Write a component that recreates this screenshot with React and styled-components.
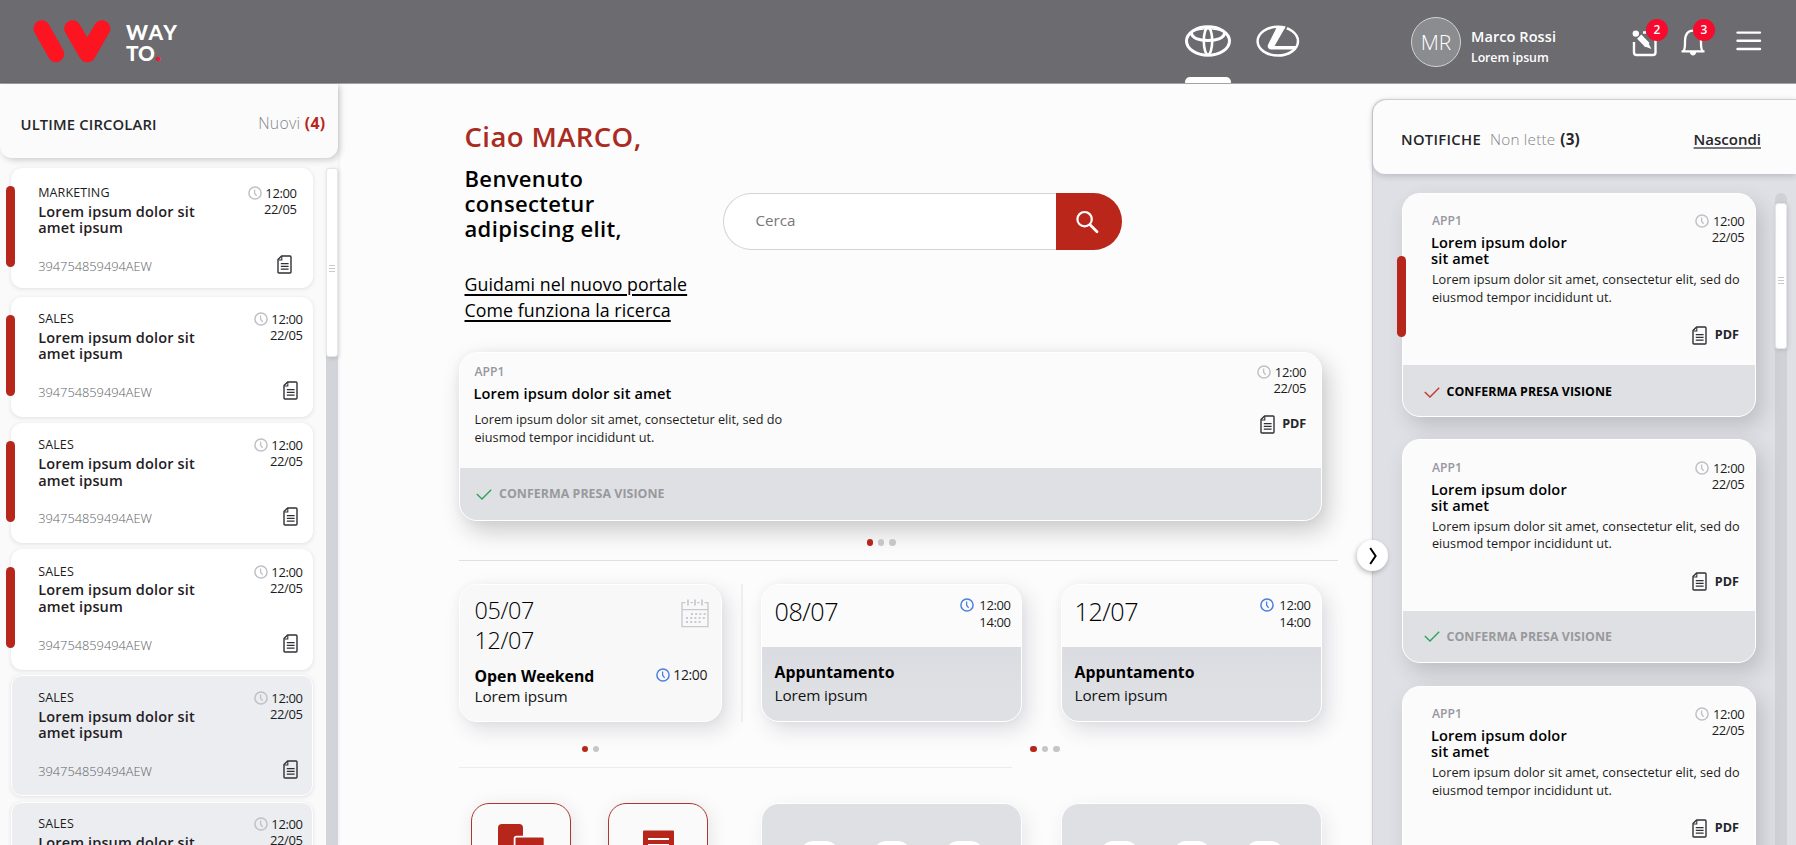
import React from "react";
import styled, { createGlobalStyle, css } from "styled-components";

const GlobalStyle = createGlobalStyle`
  * { box-sizing: border-box; }
  body {
    margin: 0;
    background: #fcfcfc;
    font-family: "Open Sans", "Noto Sans", sans-serif;
    color: #000;
    overflow: hidden;
  }
`;

const red = "#b6261b";

const type = (size, line, weight = 400, spacing = 0) => css`
  font-size: ${size}px;
  line-height: ${line}px;
  font-weight: ${weight};
  letter-spacing: ${spacing}px;
  white-space: nowrap;
`;

const Page = styled.div`
  width: 1796px;
  height: 845px;
  display: flex;
  flex-direction: column;
  overflow: hidden;
`;

/* ---------- Top bar ---------- */
const TopBar = styled.header`
  flex: none;
  height: 84px;
  display: flex;
  align-items: flex-start;
  background: #6b6b70;
  border-bottom: 1px solid #a3a3a7;
  color: #fff;
`;
const Logo = styled.div`
  display: flex;
  gap: 15px;
  padding: 20px 0 0 33px;
  width: 1185px;
`;
const LogoName = styled.div`
  font-family: Lato, "Open Sans", sans-serif;
  ${type(20.8, 21, 900, 1.5)}
  margin-top: 1px;
`;
const LogoLine = styled.div`
  height: 21px;
  letter-spacing: ${(p) => p.$spacing}px;
  span { color: #fc1230; font-size: 27px; line-height: 10px; }
`;
const BrandTab = styled.div`
  width: ${(p) => p.$width}px;
  height: 83px;
  padding-top: 25px;
  margin-right: ${(p) => p.$gap}px;
  display: flex;
  flex-direction: column;
  justify-content: space-between;
`;
const ActiveMark = styled.div`
  height: 6px;
  border-radius: 5px 5px 0 0;
  background: #fff;
`;
const Avatar = styled.div`
  width: 50px;
  height: 50px;
  margin-top: 17px;
  border: 1px solid #d3d3d5;
  border-radius: 50%;
  background: #8b8c90;
  text-align: center;
  ${type(21, 48, 300, 0)}
`;
const UserInfo = styled.div`
  width: 160px;
  padding: 25.5px 0 0 10px;
`;
const UserName = styled.div`${type(14.5, 21, 600, 0.08)}`;
const UserRole = styled.div`${type(12.4, 21, 600, -0.1)}`;
const Action = styled.div`
  position: relative;
  width: ${(p) => p.$width}px;
  margin: ${(p) => p.$top}px ${(p) => p.$gap}px 0 ${(p) => p.$left || 0}px;
  height: 30px;
`;
const Badge = styled.div`
  position: absolute;
  left: ${(p) => p.$left}px;
  top: ${(p) => p.$top}px;
  width: 22px;
  height: 22px;
  border-radius: 50%;
  background: #f70a2d;
  text-align: center;
  ${type(12, 22, 600)}
`;

/* ---------- Shared pieces ---------- */
const Body = styled.div`
  flex: 1;
  min-height: 0;
  display: flex;
`;
const When = styled.div`
  text-align: right;
  color: #1b1c20;
  ${(p) => type(p.$size || 13, p.$line || 16, 400, -0.4)}
`;
const ClockRow = styled.div`
  display: flex;
  justify-content: flex-end;
  align-items: center;
  gap: ${(p) => p.$gap || 3.6}px;
`;
const Dots = styled.div`
  display: flex;
  gap: 4.4px;
  height: 7px;
  margin-left: ${(p) => p.$left || 0}px;
`;
const Dot = styled.i`
  width: 6.8px;
  height: 6.8px;
  border-radius: 50%;
  background: ${(p) => (p.$on ? red : "#c6c6c8")};
`;
const Marker = styled.div`
  position: absolute;
  left: -6px;
  top: ${(p) => p.$top}px;
  width: 9px;
  height: 81px;
  border-radius: 4.5px;
  background: ${red};
`;
const Track = styled.div`
  flex: none;
  width: 12px;
  border-radius: 6px 6px 0 0;
  background: ${(p) => p.$color};
  padding-top: ${(p) => p.$offset || 0}px;
`;
const Thumb = styled.div`
  height: ${(p) => p.$height}px;
  border: 1px solid #e6e6e9;
  border-radius: 3px;
  background: #fff;
  box-shadow: 1px 1px 4px rgba(40, 40, 60, 0.15);
  padding-top: ${(p) => p.$grip}px;
  display: flex;
  flex-direction: column;
  align-items: center;
  gap: 2px;
  i { width: 6px; height: 1px; background: #c9cacd; }
`;

/* ---------- Left panel ---------- */
const Circulars = styled.aside`
  flex: none;
  width: 338px;
  display: flex;
  flex-direction: column;
  background: #fafafa;
  box-shadow: 1px 0 3px rgba(0, 0, 0, 0.06);
`;
const CircularsHead = styled.div`
  position: relative;
  flex: none;
  height: 73.5px;
  padding: 29px 12.5px 0 20.5px;
  display: flex;
  justify-content: space-between;
  align-items: flex-start;
  background: #fbfbfb;
  border-radius: 0 0 12px 12px;
  box-shadow: 2px 2px 6px rgba(40, 40, 60, 0.22);
`;
const PanelTitle = styled.div`
  ${(p) => type(14.8, 20, 600, p.$spacing)}
  color: #25262a;
`;
const CircularsTitle = styled(PanelTitle)`
  margin-top: 1px;
`;
const NewCount = styled.div`
  ${type(15.8, 20, 300, 0.3)}
  color: #85868a;
  b { color: ${red}; font-weight: 700; }
`;
const CircularsBody = styled.div`
  flex: 1;
  min-height: 0;
  display: flex;
  justify-content: space-between;
  padding: 10.5px 0 0 11px;
`;
const CircularList = styled.div`
  width: 302px;
`;
const CircularCard = styled.article`
  position: relative;
  height: 120.3px;
  margin-bottom: ${(p) => (p.$first ? 8.6 : 5.9)}px;
  padding: ${(p) => (p.$first ? 16 : 13.4)}px ${(p) => (p.$first ? 15.5 : 9.5)}px 0 26.2px;
  border: 1px solid #fff;
  border-radius: 11px;
  background: ${(p) => (p.$read ? "#ecedf1" : "#fff")};
  box-shadow: 0 1px 4px rgba(40, 40, 60, 0.12);
`;
const CardRow = styled.div`
  display: flex;
  justify-content: space-between;
  align-items: ${(p) => p.$align || "flex-start"};
`;
const Category = styled.div`
  ${type(12.5, 16, 400, 0.12)}
  color: #1b1c20;
`;
const CircularTitle = styled.h3`
  margin: 2.7px 0 0;
  ${type(14.5, 16.5, 600, 0.15)}
  color: #1f2024;
`;
const CircularCode = styled.div`
  ${type(12.8, 16, 300, 0)}
  color: #606166;
`;
const CodeRow = styled(CardRow)`
  margin-top: 18.2px;
  padding-right: 5px;
`;

/* ---------- Main ---------- */
const Main = styled.main`
  flex: 1;
  min-width: 0;
  padding-left: 121px;
`;
const Hero = styled.section`
  height: 268px;
  display: flex;
`;
const Greeting = styled.div`
  width: 264px;
  padding: 37px 0 0 5.5px;
`;
const Hello = styled.h1`
  margin: 0;
  ${type(27.5, 32, 600, 0.4)}
  color: #a92b22;
`;
const Welcome = styled.h2`
  margin: 13px 0 29.6px;
  ${type(22, 25, 600, 0.35)}
`;
const GuideLink = styled.a`
  display: block;
  ${type(17.8, 26.5, 400, 0.07)}
  text-decoration: underline;
  text-decoration-thickness: 1.5px;
  text-underline-offset: 3px;
`;
const Search = styled.div`
  width: 399px;
  height: 57px;
  margin-top: 109px;
  display: flex;
  border: 1px solid #d3d4d6;
  border-right: 0;
  border-radius: 28.5px;
  background: #fff;
`;
const SearchText = styled.div`
  flex: 1;
  padding-left: 31.5px;
  ${type(15.2, 53, 400, 0)}
  color: #77787b;
`;
const SearchButton = styled.div`
  width: 66px;
  margin: -1px 0;
  border-radius: 0 28.5px 28.5px 0;
  background: #bb261a;
  display: flex;
  align-items: center;
  padding-left: 19px;
`;
const Featured = styled.article`
  width: 862.5px;
  height: 169px;
  border: 1px solid #fff;
  border-radius: 18px;
  background: #fbfbfb;
  box-shadow: 6px 10px 24px rgba(0, 0, 0, 0.2), 0 0 10px rgba(0, 0, 0, 0.04);
  overflow: hidden;
`;
const FeaturedBody = styled(CardRow)`
  height: 115px;
  padding: 11.2px 14.5px 0 14.5px;
`;
const AppName = styled.div`
  ${type(12.2, 16, 600, 0)}
  color: #96979f;
`;
const FeaturedTitle = styled.h3`
  margin: 4.2px 0 9px -1px;
  ${type(14.6, 18, 600, 0.12)}
`;
const Copy = styled.p`
  margin: 0;
  ${type(12.7, 17.5, 400, 0)}
  color: #1b1c20;
`;
const Pdf = styled.div`
  display: flex;
  justify-content: flex-end;
  align-items: center;
  gap: 7.5px;
  ${type(12.6, 18, 700, -0.1)}
  color: #25262a;
`;
const FeaturedPdf = styled(Pdf)`
  margin-top: 18.6px;
`;
const Confirm = styled.div`
  height: 52px;
  padding-left: ${(p) => p.$left}px;
  display: flex;
  align-items: center;
  gap: 7px;
  background: #dfe0e4;
  ${type(12.4, 16, 700, 0.04)}
  color: ${(p) => (p.$pending ? "#000" : "#98999d")};
`;
const DotsRow = styled.div`
  display: flex;
  margin-top: ${(p) => p.$top}px;
`;
const Rule = styled.div`
  width: ${(p) => p.$width}px;
  height: ${(p) => p.$height || 1}px;
  margin-top: ${(p) => p.$top}px;
  background: ${(p) => p.$color};
`;
const Events = styled.section`
  display: flex;
  margin-top: 23px;
  height: 138px;
`;
const eventCard = css`
  flex: none;
  width: 262.5px;
  border: 1px solid #fff;
  border-radius: 18px;
  overflow: hidden;
  box-shadow: 6px 8px 20px rgba(60, 55, 90, 0.16), 0 0 8px rgba(0, 0, 0, 0.03);
`;
const WeekendCard = styled.article`
  ${eventCard}
  background: #f8f8f9;
  padding: 11px 12px 0 14.5px;
`;
const WeekendDate = styled.div`${type(23.4, 29.5, 300, -0.4)}`;
const CalendarBox = styled.div`padding-top: 3.4px;`;
const WeekendRow = styled(CardRow)`
  margin-top: 10px;
  padding-right: 1.5px;
`;
const EventTitle = styled.h3`
  margin: 0;
  ${type(15.8, 22, 700, 0)}
`;
const EventText = styled.div`
  ${(p) => type(15.3, p.$line, 400, -0.1)}
  color: #111214;
`;
const VDivider = styled.div`
  width: 1.5px;
  margin: 0 18px 0 19.5px;
  background: #eeeef1;
`;
const AppointmentCard = styled.article`
  ${eventCard}
  width: 261.5px;
  margin-right: 38.5px;
  background: #fbfbfc;
`;
const AppointmentHead = styled(CardRow)`
  height: 62px;
  padding: 8.5px 10.5px 0 13px;
`;
const AppointmentWhen = styled.div`padding-top: 3px;`;
const AppointmentDate = styled.div`${type(25.2, 34, 300, -0.5)}`;
const AppointmentBody = styled.div`
  height: 76px;
  padding: 14px 0 0 13px;
  background: linear-gradient(#dbdce1, #dfe0e4 60%);
`;
const Tiles = styled.section`
  display: flex;
  margin-top: 35px;
`;
const Tile = styled.div`
  flex: none;
  width: 100px;
  height: 100px;
  margin: 0 ${(p) => p.$right}px 0 ${(p) => p.$left}px;
  padding-top: 20px;
  border: 1.5px solid #ac3931;
  border-radius: 18px;
  background: #fafafa;
  box-shadow: 2px 3px 18px rgba(60, 55, 90, 0.12);
  display: flex;
  justify-content: center;
`;
const WideTile = styled.div`
  flex: none;
  width: 261.5px;
  height: 130px;
  margin-right: 38.5px;
  padding: 37px 0 0 39.5px;
  border: 1px solid #fff;
  border-radius: 18px;
  background: #dfe0e4;
  box-shadow: 4px 6px 18px rgba(60, 55, 90, 0.1);
  display: flex;
  gap: 36px;
`;
const Slot = styled.div`
  width: 36.5px;
  height: 36.5px;
  border-radius: 12px;
  background: #fff;
`;

/* ---------- Right panel ---------- */
const Notifications = styled.aside`
  position: relative;
  flex: none;
  width: 424px;
  margin-top: 15px;
  border-left: 1px solid #cfd0d4;
  border-radius: 14px 0 0 0;
  background: #dfe0e5;
  box-shadow: -1px 0 3px rgba(0, 0, 0, 0.05);
`;
const NotificationsHead = styled.div`
  height: 75px;
  padding: 28.6px 35px 0 28px;
  display: flex;
  border-top: 1px solid #cfd0d3;
  border-radius: 14px 0 0 12px;
  background: #fcfcfc;
  box-shadow: 0 2px 6px rgba(40, 40, 60, 0.2);
`;
const Unread = styled.div`
  flex: 1;
  margin-left: 9px;
  ${type(15.3, 20, 300, 0.22)}
  color: #85868a;
  b { color: #25262a; font-weight: 700; margin-left: 0.6px; }
`;
const HideLink = styled.a`
  ${type(15, 20, 600, 0)}
  color: #25262a;
  text-decoration: underline;
  text-decoration-color: #77787b;
  text-decoration-thickness: 2px;
  text-underline-offset: 2px;
`;
const NotificationsBody = styled.div`
  height: 671px;
  padding: 18.5px 9px 0 29px;
  display: flex;
  justify-content: space-between;
`;
const NotificationCard = styled.article`
  position: relative;
  width: 354px;
  height: 224px;
  margin-bottom: 22.5px;
  border: 1px solid #fff;
  border-radius: 18px;
  background: #fbfbfb;
  box-shadow: 6px 9px 20px rgba(60, 55, 70, 0.2);
`;
const NotificationMain = styled.div`
  height: 171px;
  padding: 19.6px 10.8px 0 29px;
`;
const NotificationTitle = styled.h3`
  margin: 5.2px 0 5.2px -1px;
  ${type(14.6, 16, 600, 0.12)}
`;
const PdfRow = styled.div`
  display: flex;
  justify-content: flex-end;
  margin-top: 19.4px;
  padding-right: 5.5px;
`;
const NotificationFoot = styled(Confirm)`
  height: 51px;
  padding-top: ${(p) => (p.$pending ? 4.5 : 0)}px;
  border-radius: 0 0 17px 17px;
`;
const Toggle = styled.div`
  position: absolute;
  left: -16px;
  top: 441px;
  width: 31px;
  height: 31px;
  border-radius: 50%;
  background: #fff;
  box-shadow: -1px 2px 5px rgba(0, 0, 0, 0.25);
  display: flex;
  align-items: center;
  justify-content: center;
`;

/* ---------- Icons ---------- */
const WayMark = () => (
  <svg width="78" height="43" viewBox="0 0 78 43" fill="none" stroke="#fc1421" strokeLinecap="round" strokeLinejoin="round">
    <path d="M8.7 8.4 L23 34" strokeWidth="16.4" />
    <path d="M39.5 8.6 L54.3 34 L69 8.6" strokeWidth="16.6" />
  </svg>
);
const ToyotaMark = () => (
  <svg width="46" height="32" viewBox="0 0 46 32" fill="none" stroke="#fff">
    <ellipse cx="23" cy="16" rx="21.5" ry="14.2" strokeWidth="3" />
    <path d="M6.4 7.6 C6.4 13 14 15.4 23 15.4 C32 15.4 39.6 13 39.6 7.6" strokeWidth="3" />
    <path d="M8 6.6 C14 3 32 3 38 6.6" strokeWidth="1.4" />
    <ellipse cx="23" cy="16" rx="4.2" ry="13.6" strokeWidth="2.6" />
  </svg>
);
const LexusMark = () => (
  <svg width="44" height="32" viewBox="0 0 44 32" fill="none" stroke="#fff">
    <ellipse cx="21.8" cy="16.2" rx="20.2" ry="14.4" strokeWidth="2.5" />
    <path d="M31.4 0 L28.2 6.6" stroke="#6b6b70" strokeWidth="1.8" />
    <path d="M20.6 2.6 Q25 0.8 29.2 2.4 L18.6 21 H40 L37.4 24.6 H15.6 C11.6 24.6 10.8 21.4 12.6 18.4 Z" fill="#fff" stroke="none" />
  </svg>
);
const EditIcon = () => (
  <svg width="26" height="27" viewBox="0 0 26 27" fill="none" stroke="#fff">
    <path d="M2 12 V22.5 Q2 25 4.5 25 H21 Q23.5 25 23.5 22.5 V10 M11 2.5 H14" strokeWidth="2.4" />
    <path d="M7.2 6.6 L15.4 15" strokeWidth="6" />
    <path d="M11.6 16 L16 12.2 L19.4 19 Z" fill="#fff" stroke="none" />
    <circle cx="3.8" cy="3.6" r="3.2" fill="#fff" stroke="none" />
  </svg>
);
const BellIcon = () => (
  <svg width="26" height="29" viewBox="0 0 26 29" fill="none" stroke="#fff" strokeWidth="2.3">
    <path d="M1.5 23.4 H24.5 M3.5 23 C5.2 21 5 19 5 13 C5 6 8 2.6 13 2.6 C18 2.6 21 6 21 13 C21 19 20.8 21 22.5 23" />
    <path d="M9.8 24 H16.2 C16 28.6 10 28.6 9.8 24 Z" fill="#fff" stroke="none" />
  </svg>
);
const MenuIcon = () => (
  <svg width="26" height="22" viewBox="0 0 26 22" stroke="#fff" strokeWidth="2.4" strokeLinecap="round">
    <path d="M1.5 2.6 H24 M1.5 10.8 H24 M1.5 19 H24" />
  </svg>
);
const Clock = ({ color = "#c0c1c6" }) => (
  <svg width="14" height="14" viewBox="0 0 14 14" fill="none" stroke={color}>
    <circle cx="7" cy="7" r="6.1" strokeWidth="1.5" />
    <path d="M6.6 3.4 V7.2 L8.6 9.8" strokeWidth="1.3" />
  </svg>
);
const DocIcon = () => (
  <svg width="15" height="19" viewBox="0 0 15 19" fill="none" stroke="#303136" strokeWidth="1.4">
    <path d="M4.6 1 H13 Q14 1 14 2 V17 Q14 18 13 18 H2 Q1 18 1 17 V4.6 Z" strokeLinejoin="round" />
    <path d="M4.8 1.2 V5 H1.6" strokeWidth="1.1" />
    <path d="M3.8 8.6 H11.6 M3.8 11.4 H11.6 M3.8 14.2 H11.6" strokeWidth="1.2" />
  </svg>
);
const Check = ({ color }) => (
  <svg width="16" height="11" viewBox="0 0 16 11" fill="none" stroke={color} strokeWidth="1.4">
    <path d="M0.8 5 L6 10 L15.2 0.8" />
  </svg>
);
const SearchIcon = () => (
  <svg width="24" height="24" viewBox="0 0 24 24" fill="none" stroke="#fff" strokeLinecap="round">
    <circle cx="9.6" cy="9.2" r="7.2" strokeWidth="2.2" />
    <path d="M15 14.8 L22 21.8" strokeWidth="2.8" />
  </svg>
);
const CalendarIcon = () => (
  <svg width="28" height="29" viewBox="0 0 28 29" fill="none" stroke="#c9cad0" strokeWidth="1.4">
    <path d="M4.5 3.6 H1 V27.6 H27 V3.6 H23.5 M9.5 3.6 H12 M16 3.6 H18.5 M1 10.6 H27" />
    <path d="M7 0.5 V6.6 M14 0.5 V6.6 M21 0.5 V6.6" strokeWidth="1.8" />
    <path d="M10 15 H25 M5 19 H25 M5 23 H20.5" strokeWidth="2" strokeDasharray="2 2.2" />
  </svg>
);
const Chevron = () => (
  <svg width="8" height="18" viewBox="0 0 8 18" fill="none" stroke="#000" strokeWidth="2">
    <path d="M1.2 1 L6.6 9 L1.2 17" />
  </svg>
);
const FoldersIcon = () => (
  <svg width="46" height="40" viewBox="0 0 46 40" fill={red}>
    <rect x="0" y="0" width="25" height="34" rx="4" />
    <rect x="16.6" y="12.6" width="30" height="30" rx="2" stroke="#fff" strokeWidth="1.8" />
  </svg>
);
const SheetIcon = () => (
  <svg width="31" height="40" viewBox="0 0 31 40" fill={red}>
    <rect x="0" y="6.5" width="31" height="34" rx="1" />
    <path d="M5 15 H26 M5 21 H26" stroke="#fff" strokeWidth="2" />
  </svg>
);

const TimeStamp = ({ lines = ["12:00", "22/05"], clock, ...rest }) => (
  <When {...rest}>
    <ClockRow $gap={rest.$gap}><Clock color={clock} />{lines[0]}</ClockRow>
    {lines[1]}
  </When>
);

const circulars = [
  { area: "MARKETING", unread: true },
  { area: "SALES", unread: true },
  { area: "SALES", unread: true },
  { area: "SALES", unread: true },
  { area: "SALES" },
  { area: "SALES" },
];

const Grip = () => (<><i /><i /><i /></>);

export default function App() {
  return (
    <Page>
      <GlobalStyle />
      <TopBar>
        <Logo>
          <WayMark />
          <LogoName>
            <LogoLine $spacing={1.6}>WAY</LogoLine>
            <LogoLine $spacing={0}>TO<span>.</span></LogoLine>
          </LogoName>
        </Logo>
        <BrandTab $width={46} $gap={25}><ToyotaMark /><ActiveMark /></BrandTab>
        <BrandTab $width={44} $gap={111}><LexusMark /></BrandTab>
        <Avatar>MR</Avatar>
        <UserInfo>
          <UserName>Marco Rossi</UserName>
          <UserRole>Lorem ipsum</UserRole>
        </UserInfo>
        <Action $width={26} $top={30} $gap={22} $left={11}>
          <EditIcon /><Badge $left={14} $top={-11}>2</Badge>
        </Action>
        <Action $width={26} $top={28} $gap={30}>
          <BellIcon /><Badge $left={13} $top={-9}>3</Badge>
        </Action>
        <Action $width={26} $top={30} $gap={0}><MenuIcon /></Action>
      </TopBar>

      <Body>
        <Circulars>
          <CircularsHead>
            <CircularsTitle $spacing={0.15}>ULTIME CIRCOLARI</CircularsTitle>
            <NewCount>Nuovi <b>(4)</b></NewCount>
          </CircularsHead>
          <CircularsBody>
            <CircularList>
              {circulars.map((c, i) => (
                <CircularCard key={i} $first={i === 0} $read={!c.unread}>
                  {c.unread && <Marker $top={17} />}
                  <CardRow>
                    <div>
                      <Category>{c.area}</Category>
                      <CircularTitle>Lorem ipsum dolor sit<br />amet ipsum</CircularTitle>
                    </div>
                    <TimeStamp />
                  </CardRow>
                  <CodeRow $align="flex-end">
                    <CircularCode>394754859494AEW</CircularCode>
                    <DocIcon />
                  </CodeRow>
                </CircularCard>
              ))}
            </CircularList>
            <Track $color="#d3d4d9"><Thumb $height={189} $grip={96}><Grip /></Thumb></Track>
          </CircularsBody>
        </Circulars>

        <Main>
          <Hero>
            <Greeting>
              <Hello>Ciao MARCO,</Hello>
              <Welcome>Benvenuto<br />consectetur<br />adipiscing elit,</Welcome>
              <GuideLink>Guidami nel nuovo portale</GuideLink>
              <GuideLink>Come funziona la ricerca</GuideLink>
            </Greeting>
            <Search>
              <SearchText>Cerca</SearchText>
              <SearchButton><SearchIcon /></SearchButton>
            </Search>
          </Hero>

          <Featured>
            <FeaturedBody>
              <div>
                <AppName>APP1</AppName>
                <FeaturedTitle>Lorem ipsum dolor sit amet</FeaturedTitle>
                <Copy>Lorem ipsum dolor sit amet, consectetur elit, sed do<br />eiusmod tempor incididunt ut.</Copy>
              </div>
              <div>
                <TimeStamp />
                <FeaturedPdf><DocIcon />PDF</FeaturedPdf>
              </div>
            </FeaturedBody>
            <Confirm $left={16}><Check color="#2fa35a" />CONFERMA PRESA VISIONE</Confirm>
          </Featured>
          <DotsRow $top={18}>
            <Dots $left={407.5}><Dot $on /><Dot /><Dot /></Dots>
          </DotsRow>
          <Rule $width={879} $top={14} $color="#dfe0e2" />

          <Events>
            <WeekendCard>
              <CardRow>
                <WeekendDate>05/07<br />12/07</WeekendDate>
                <CalendarBox><CalendarIcon /></CalendarBox>
              </CardRow>
              <WeekendRow>
                <EventTitle>Open Weekend</EventTitle>
                <When $size={14} $line={20}>
                  <ClockRow><Clock color="#4a80dd" />12:00</ClockRow>
                </When>
              </WeekendRow>
              <EventText $line={19}>Lorem ipsum</EventText>
            </WeekendCard>
            <VDivider />
            {["08/07", "12/07"].map((d) => (
              <AppointmentCard key={d}>
                <AppointmentHead>
                  <AppointmentDate>{d}</AppointmentDate>
                  <AppointmentWhen>
                    <TimeStamp lines={["12:00", "14:00"]} clock="#4a80dd" $line={17.6} $gap={5} />
                  </AppointmentWhen>
                </AppointmentHead>
                <AppointmentBody>
                  <EventTitle>Appuntamento</EventTitle>
                  <EventText $line={24.5}>Lorem ipsum</EventText>
                </AppointmentBody>
              </AppointmentCard>
            ))}
          </Events>
          <DotsRow $top={23.5}>
            <Dots $left={122.5}><Dot $on /><Dot /></Dots>
            <Dots $left={431}><Dot $on /><Dot /><Dot /></Dots>
          </DotsRow>
          <Rule $width={552.5} $height={1.5} $top={14} $color="#ececef" />

          <Tiles>
            <Tile $left={12} $right={37}><FoldersIcon /></Tile>
            <Tile $left={0} $right={52.5}><SheetIcon /></Tile>
            <WideTile><Slot /><Slot /><Slot /></WideTile>
            <WideTile><Slot /><Slot /><Slot /></WideTile>
          </Tiles>
        </Main>

        <Notifications>
          <NotificationsHead>
            <PanelTitle $spacing={0.3}>NOTIFICHE</PanelTitle>
            <Unread>Non lette <b>(3)</b></Unread>
            <HideLink>Nascondi</HideLink>
          </NotificationsHead>
          <NotificationsBody>
            <div>
              {[true, false, false].map((pending, i) => (
                <NotificationCard key={i}>
                  {pending && <Marker $top={62} />}
                  <NotificationMain>
                    <CardRow>
                      <div>
                        <AppName>APP1</AppName>
                        <NotificationTitle>Lorem ipsum dolor<br />sit amet</NotificationTitle>
                      </div>
                      <TimeStamp />
                    </CardRow>
                    <Copy>Lorem ipsum dolor sit amet, consectetur elit, sed do<br />eiusmod tempor incididunt ut.</Copy>
                    <PdfRow><Pdf><DocIcon />PDF</Pdf></PdfRow>
                  </NotificationMain>
                  <NotificationFoot $left={20.5} $pending={pending}>
                    <Check color={pending ? "#c4382f" : "#2fa35a"} />CONFERMA PRESA VISIONE
                  </NotificationFoot>
                </NotificationCard>
              ))}
            </div>
            <Track $color="#d0d1d6" $offset={10}><Thumb $height={146} $grip={73}><Grip /></Thumb></Track>
          </NotificationsBody>
          <Toggle><Chevron /></Toggle>
        </Notifications>
      </Body>
    </Page>
  );
}
